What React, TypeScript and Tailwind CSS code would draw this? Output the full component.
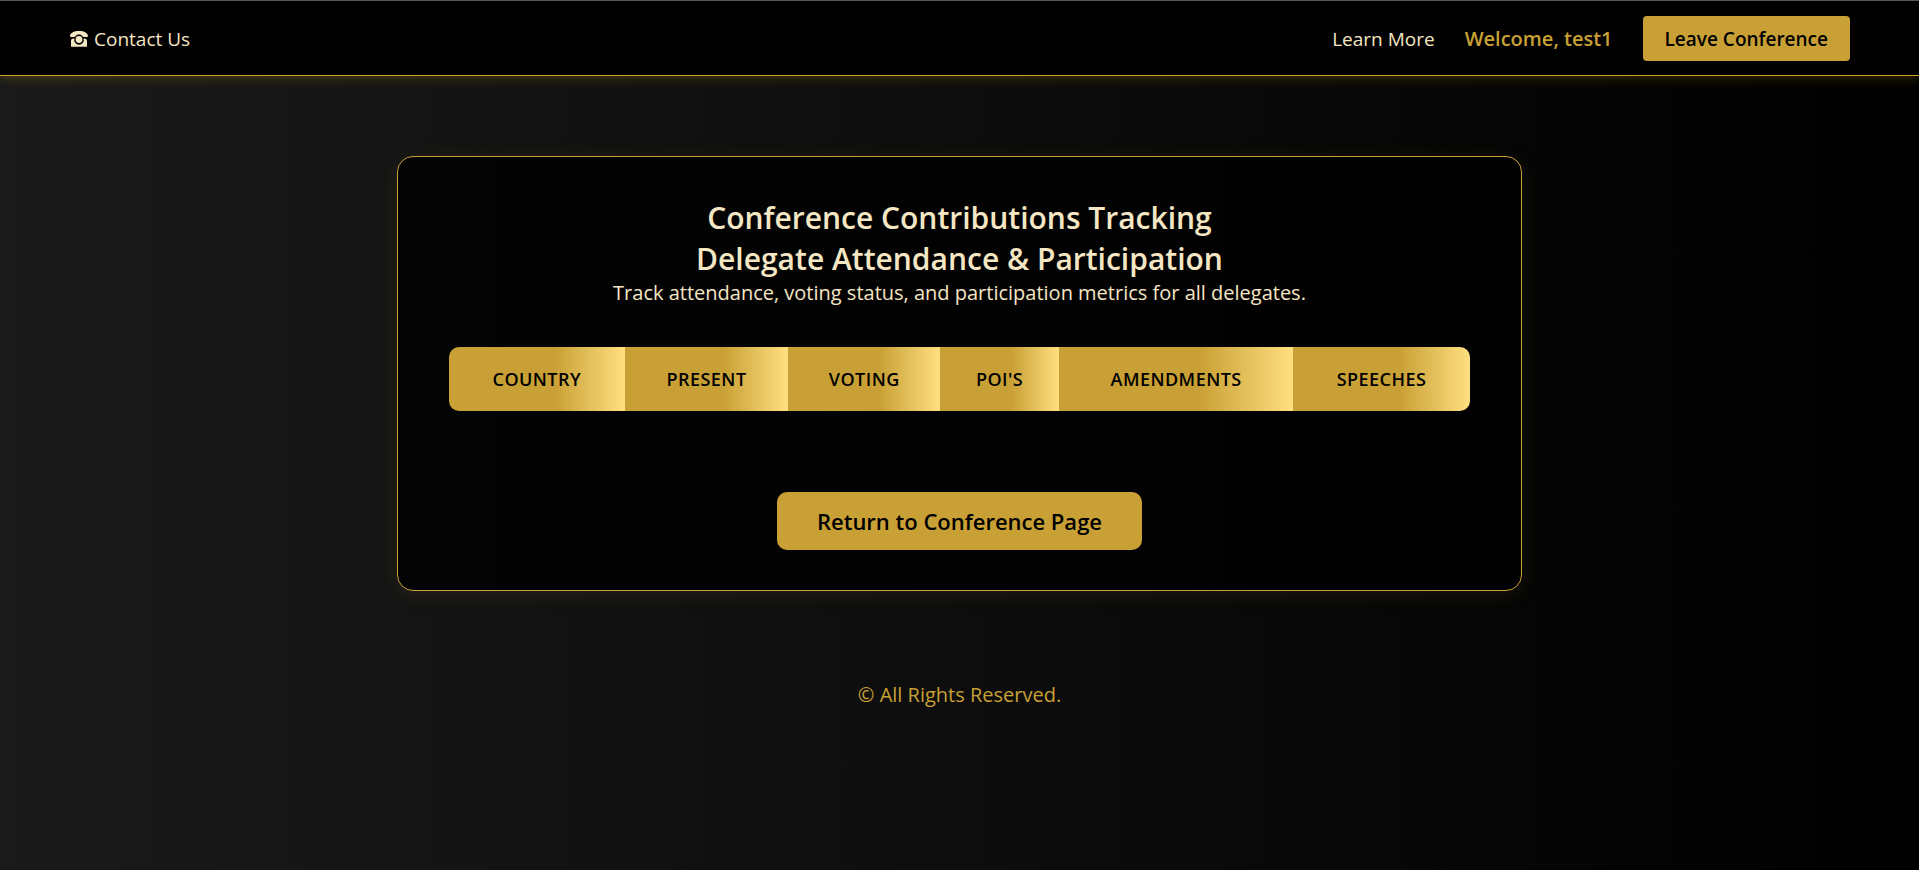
const columns = ["Country", "Present", "Voting", "POI's", "Amendments", "Speeches"];

function PhoneIcon() {
  return (
    <svg viewBox="0 0 18 16" className="h-4 w-[18px] shrink-0" fill="currentColor" aria-hidden="true">
      <path d="M0 5.2C0 2 3.6 0 9 0s9 2 9 5.200c0 .4-.3.700-1 .700h-3.200c-.7 0-1-.3-1.300-.7C11.700 4.100 10.500 3.500 9 3.500S6.300 4.100 5.500 5.200c-.3.400-.6.700-1.300.700H1c-.7 0-1-.300-1-.700Z" />
      <path d="M1 15.800V10c0-1.400.9-2.300 2.400-2.400l1-.1a4.800 4.800 0 1 0 9.200 0l1 .1c1.500.1 2.400 1 2.400 2.400v5.800Z" />
      <circle cx="9" cy="8.500" r="3.400" />
    </svg>
  );
}

export default function App() {
  return (
    <div className="flex min-h-screen flex-col bg-[linear-gradient(to_right,#1a1a1a,#000)] font-['Open_Sans',sans-serif] text-[#f5e6c4]">
      <header className="flex items-center justify-between border-t border-t-[#555] border-b border-b-[#c9a035] bg-black pt-[15px] pr-[69px] pb-[14px] pl-[70px] shadow-[0_2px_10px_rgba(255,215,0,0.2)]">
        <a href="#contact" className="flex items-center gap-1.5 text-[19px] leading-6 font-medium">
          <PhoneIcon />
          Contact Us
        </a>
        <nav className="flex items-center gap-[30px]">
          <a href="#learn" className="text-[19px] leading-6 font-medium">Learn More</a>
          <span className="text-xl leading-7 font-semibold text-[#c9a035]">Welcome, test1</span>
          <button type="button" className="h-[45px] rounded bg-[#c9a035] px-[22px] text-[19px] leading-6 font-semibold text-black">
            Leave Conference
          </button>
        </nav>
      </header>

      <main className="mx-auto mt-20 w-full max-w-[1125px] rounded-2xl border border-[#c9a035] bg-black/80 px-[51px] py-10 text-center shadow-[0_4px_20px_rgba(201,160,53,0.1)]">
        <h1 className="text-3xl leading-[41px] font-semibold">Conference Contributions Tracking</h1>
        <h2 className="text-3xl leading-[41px] font-semibold">Delegate Attendance &amp; Participation</h2>
        <p className="text-xl leading-[27px]">Track attendance, voting status, and participation metrics for all delegates.</p>
        <table className="mt-[41px] w-full overflow-hidden rounded-[10px]">
          <thead>
            <tr>
              {columns.map((column) => (
                <th
                  key={column}
                  scope="col"
                  className="h-16 bg-[linear-gradient(to_right,#c9a035_60%,#ffdf80)] px-5 text-lg font-semibold tracking-wide text-black uppercase"
                >
                  {column}
                </th>
              ))}
            </tr>
          </thead>
        </table>
        <button type="button" className="mt-[81px] h-[58px] rounded-[10px] bg-[#c9a035] px-10 text-[22px] font-semibold text-black">
          Return to Conference Page
        </button>
      </main>

      <footer className="py-[90px] text-center text-xl leading-[27px] text-[#c9a035]">© All Rights Reserved.</footer>
    </div>
  );
}
